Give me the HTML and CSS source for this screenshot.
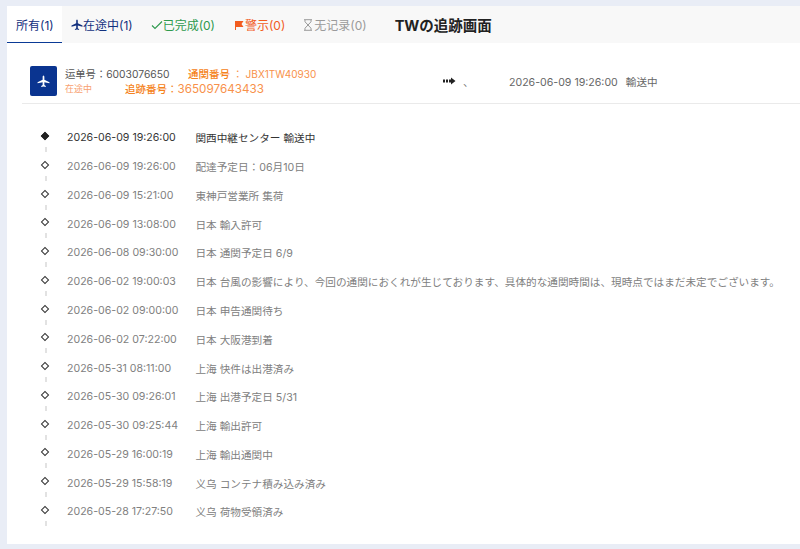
FILE: index.html
```html
<!DOCTYPE html>
<html>
<head>
  <title>TWの追跡画面</title>
  <meta charset="utf-8">
  <link rel="stylesheet" href="styles.css">
</head>
<body>
  <div class="card">
    <div class="tabs">
      <div class="tab active">所有(1)</div>
      <div class="tab blue">
        <svg class="tab-icon" viewBox="0 0 12 12"><path d="M6 .5c.5 0 .8.8.8 1.600v2.200l4.700 2.300v1.100L6.800 6.600v2.600l1.300 1v.9L6 10.500l-2.100.6v-.9l1.300-1V6.600L.5 7.700V6.600l4.700-2.300V2.100C5.200 1.300 5.500.5 6 .5z"/></svg>在途中(1)
      </div>
      <div class="tab green">
        <svg class="tab-icon" viewBox="0 0 12 12"><path d="M1 6.500l3 3L11 2.500" fill="none" stroke="currentColor" stroke-width="1.100"/></svg>已完成(0)
      </div>
      <div class="tab orange">
        <svg class="tab-icon" viewBox="0 0 12 12"><path d="M2 2h8.500L8.500 5l2 3H3v3H2z"/></svg>警示(0)
      </div>
      <div class="tab gray">
        <svg class="tab-icon hourglass" viewBox="0 0 10 12"><path d="M1 .7h8M1 11.300h8M2 1v1.800L5 6 2 9.200V11M8 1v1.800L5 6l3 3.200V11" fill="none" stroke="currentColor"/></svg>无记录(0)
      </div>
      <div class="page-title">TWの追跡画面</div>
    </div>

    <div class="summary">
      <div class="plane-box">
        <svg viewBox="0 0 12 12"><path d="M6 .5c.5 0 .8.8.8 1.600v2.200l4.700 2.300v1.100L6.800 6.600v2.600l1.300 1v.9L6 10.500l-2.100.6v-.9l1.300-1V6.600L.5 7.700V6.600l4.700-2.300V2.100C5.200 1.300 5.500.5 6 .5z"/></svg>
      </div>
      <div class="summary-info">
        <div class="info-line">
          <span class="waybill">运单号：6003076650</span>
          <span class="customs"><b>通関番号</b> ： JBX1TW40930</span>
        </div>
        <div class="info-line">
          <span class="status">在途中</span>
          <span class="tracking"><b>追跡番号</b>：<span class="tracking-no">365097643433</span></span>
        </div>
      </div>
      <div class="route">
        <svg class="route-icon" viewBox="0 0 13 8"><path d="M0 2.500h2v3H0zM3 2.500h2v3H3zM6 2.500h2V.5L12.500 4 8 7.500v-2H6z"/></svg>
        <span class="route-sep">、</span>
      </div>
      <div class="latest">2026-06-09 19:26:00<span class="latest-status">輸送中</span></div>
    </div>

    <ul class="timeline">
      <li class="event current"><span class="time">2026-06-09 19:26:00</span><span class="desc">関西中継センター 輸送中</span></li>
      <li class="event"><span class="time">2026-06-09 19:26:00</span><span class="desc">配達予定日：06月10日</span></li>
      <li class="event"><span class="time">2026-06-09 15:21:00</span><span class="desc">東神戸営業所 集荷</span></li>
      <li class="event"><span class="time">2026-06-09 13:08:00</span><span class="desc">日本 輸入許可</span></li>
      <li class="event"><span class="time">2026-06-08 09:30:00</span><span class="desc">日本 通関予定日 6/9</span></li>
      <li class="event"><span class="time">2026-06-02 19:00:03</span><span class="desc">日本 台風の影響により、今回の通関におくれが生じております、具体的な通関時間は、現時点ではまだ未定でございます。</span></li>
      <li class="event"><span class="time">2026-06-02 09:00:00</span><span class="desc">日本 申告通関待ち</span></li>
      <li class="event"><span class="time">2026-06-02 07:22:00</span><span class="desc">日本 大阪港到着</span></li>
      <li class="event"><span class="time">2026-05-31 08:11:00</span><span class="desc">上海 快件は出港済み</span></li>
      <li class="event"><span class="time">2026-05-30 09:26:01</span><span class="desc">上海 出港予定日 5/31</span></li>
      <li class="event"><span class="time">2026-05-30 09:25:44</span><span class="desc">上海 輸出許可</span></li>
      <li class="event"><span class="time">2026-05-29 16:00:19</span><span class="desc">上海 輸出通関中</span></li>
      <li class="event"><span class="time">2026-05-29 15:58:19</span><span class="desc">义乌 コンテナ積み込み済み</span></li>
      <li class="event"><span class="time">2026-05-28 17:27:50</span><span class="desc">义乌 荷物受領済み</span></li>
    </ul>
  </div>
</body>
</html>
```

FILE: styles.css
```css
html, body {
  height: 100%;
}

body {
  margin: 0;
  padding: 6px 0 5px 7px;
  box-sizing: border-box;
  background-color: #e9edf6;
  color: #333;
  font-family: Inter, "Noto Sans CJK JP", sans-serif;
  font-size: 10.600px;
  overflow: hidden;
}

.card {
  height: 100%;
  background-color: white;
}

.tabs {
  display: flex;
  align-items: center;
  height: 37px;
  background-color: #f8f8f8;
  font-size: 12px;
}

.tab {
  display: flex;
  align-items: center;
  height: 100%;
  box-sizing: border-box;
  padding: 0 9px;
  white-space: nowrap;
}

.tab.active {
  width: 55px;
  background-color: white;
  border-bottom: 1px solid #0a3a96;
  color: #12307e;
}

.tab-icon {
  width: 12px;
  height: 12px;
  fill: currentColor;
}

.hourglass {
  width: 10px;
  margin-right: 1px;
}

.blue {
  color: #12307e;
}

.green {
  color: #2e9a4e;
}

.orange {
  color: #f25c1e;
}

.gray {
  color: #9a9a9a;
}

.page-title {
  margin-left: 19px;
  font-size: 14.500px;
  font-weight: bold;
  color: #222;
}

.summary {
  display: flex;
  align-items: center;
  box-sizing: border-box;
  height: 61px;
  margin-left: 15px;
  padding: 16px 0 0 8px;
  border-bottom: 1px solid #eaeaea;
}

.plane-box {
  display: flex;
  justify-content: center;
  align-items: center;
  width: 27px;
  height: 30px;
  border-radius: 2px;
  background-color: #0a3490;
}

.plane-box svg {
  width: 13px;
  height: 13px;
  fill: white;
}

.summary-info {
  width: 378px;
  margin-left: 8px;
}

.info-line {
  display: flex;
  align-items: center;
  height: 15px;
}

.waybill {
  width: 123px;
  font-size: 10.300px;
  color: #555;
}

.customs {
  font-size: 10px;
  color: #f8914a;
}

.customs b, .tracking b {
  font-size: 10.500px;
  font-weight: 500;
  color: #f58220;
}

.status {
  width: 60px;
  font-size: 9px;
  color: #f8a070;
}

.tracking {
  color: #f58220;
  font-size: 10.500px;
}

.tracking-no {
  font-size: 11.700px;
  color: #f8914a;
}

.route {
  display: flex;
  align-items: center;
  width: 66px;
}

.route-icon {
  width: 13px;
  height: 8px;
  fill: #222;
}

.route-sep {
  margin-left: 7px;
  color: #777;
}

.latest {
  color: #666;
}

.latest-status {
  margin-left: 8px;
}

.timeline {
  margin: 19px 0 0;
  padding: 0;
  list-style: none;
}

.event {
  position: relative;
  display: flex;
  align-items: center;
  box-sizing: border-box;
  height: 28.770px;
  padding: 1px 0 0 60px;
  color: #808080;
}

/* diamond marker */
.event::before {
  content: "";
  position: absolute;
  left: 35px;
  top: 10px;
  width: 4px;
  height: 4px;
  border: 1px solid #333;
  background-color: white;
  transform: rotate(45deg);
}

/* dashed line piece under the marker */
.event::after {
  content: "";
  position: absolute;
  left: 38px;
  top: 24px;
  width: 2px;
  height: 5px;
  background-color: #e2e2e2;
}

.event.current {
  color: #333;
}

.event.current::before {
  background-color: #222;
  border-color: #222;
}

.time {
  width: 128.500px;
  flex-shrink: 0;
}

.desc {
  font-size: 10.640px;
  white-space: nowrap;
}
```
